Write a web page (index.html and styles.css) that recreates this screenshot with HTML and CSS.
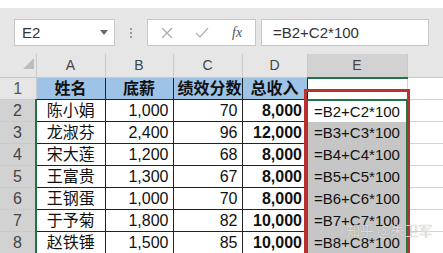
FILE: index.html
```html
<!DOCTYPE html>
<html lang="zh">
<head>
    <meta charset="UTF-8">
    <title>Excel</title>
    <link rel="stylesheet" href="styles.css">
</head>
<body>
    <div class="toolbar">
        <div class="name-box">
            <span>E2</span>
            <svg class="drop" width="8" height="5" viewBox="0 0 8 5"><path d="M0 0h8L4 5z" fill="#666"/></svg>
        </div>
        <div class="dots"><i></i><i></i><i></i></div>
        <div class="tools">
            <svg width="12" height="12" viewBox="0 0 12 12"><path d="M1 1l10 10M11 1L1 11" stroke="#aaa" stroke-width="1.3"/></svg>
            <svg width="14" height="12" viewBox="0 0 14 12"><path d="M1 6l4 4 8-9" stroke="#b5b5b5" stroke-width="1.4" fill="none"/></svg>
            <span class="fx">fx</span>
        </div>
        <div class="formula">=B2+C2*100</div>
    </div>

    <div class="sheet">
        <table class="grid">
            <colgroup>
                <col class="c-hdr"><col class="c-a"><col class="c-b"><col class="c-c"><col class="c-d"><col class="c-e"><col>
            </colgroup>
            <tr class="col-hdr">
                <th class="corner"><svg width="11" height="11" viewBox="0 0 11 11"><path d="M11 0v11H0z" fill="#bdbdbd"/></svg></th>
                <th>A</th><th>B</th><th>C</th><th>D</th><th class="sel">E</th><th class="blank"></th>
            </tr>
            <tr>
                <th class="rh">1</th>
                <td class="title">姓名</td><td class="title">底薪</td><td class="title">绩效分数</td><td class="title">总收入</td><td class="e-empty"></td><td class="out"></td>
            </tr>
            <tr>
                <th class="rh on">2</th>
                <td class="name">陈小娟</td><td class="num">1,000</td><td class="num">70</td><td class="num b">8,000</td><td class="f active">=B2+C2*100</td><td class="out"></td>
            </tr>
            <tr>
                <th class="rh on">3</th>
                <td class="name">龙淑芬</td><td class="num">2,400</td><td class="num">96</td><td class="num b">12,000</td><td class="f">=B3+C3*100</td><td class="out"></td>
            </tr>
            <tr>
                <th class="rh on">4</th>
                <td class="name">宋大莲</td><td class="num">1,200</td><td class="num">68</td><td class="num b">8,000</td><td class="f">=B4+C4*100</td><td class="out"></td>
            </tr>
            <tr>
                <th class="rh on">5</th>
                <td class="name">王富贵</td><td class="num">1,300</td><td class="num">67</td><td class="num b">8,000</td><td class="f">=B5+C5*100</td><td class="out"></td>
            </tr>
            <tr>
                <th class="rh on">6</th>
                <td class="name">王钢蛋</td><td class="num">1,000</td><td class="num">70</td><td class="num b">8,000</td><td class="f">=B6+C6*100</td><td class="out"></td>
            </tr>
            <tr>
                <th class="rh on">7</th>
                <td class="name">于予菊</td><td class="num">1,800</td><td class="num">82</td><td class="num b">10,000</td><td class="f">=B7+C7*100</td><td class="out"></td>
            </tr>
            <tr>
                <th class="rh on">8</th>
                <td class="name">赵铁锤</td><td class="num">1,500</td><td class="num">85</td><td class="num b">10,000</td><td class="f">=B8+C8*100</td><td class="out"></td>
            </tr>
            <tr>
                <th class="rh on"></th>
                <td class="name"></td><td class="num"></td><td class="num"></td><td class="num b"></td><td class="f"></td><td class="out"></td>
            </tr>
        </table>
        <div class="red-box"></div>
        <div class="mark">知乎 @朱卫军</div>
    </div>
</body>
</html>
```

FILE: styles.css
```css
body {
    margin: 0;
    width: 443px;
    height: 253px;
    overflow: hidden;
    background-color: #ffffff;
    font-family: "Liberation Sans", Arial, "Noto Sans CJK SC", sans-serif;
}
.toolbar {
    margin-top: 8px;
    height: 46px;
    background-color: #e6e6e6;
    display: flex;
    align-items: flex-start;
    padding-top: 11px;
    box-sizing: border-box;
}
.name-box {
    margin-left: 14px;
    width: 101px;
    height: 27px;
    box-sizing: border-box;
    background-color: #fff;
    border: 1px solid #c6c6c6;
    display: flex;
    align-items: center;
    justify-content: space-between;
    padding: 0 6px 0 7px;
    font-size: 15px;
    color: #333;
}
.dots {
    width: 32px;
    height: 27px;
    display: flex;
    flex-direction: column;
    align-items: center;
    justify-content: center;
    gap: 2px;
}
.dots i {
    width: 2px;
    height: 2px;
    background-color: #9a9a9a;
}
.tools {
    width: 109px;
    height: 27px;
    box-sizing: border-box;
    background-color: #fff;
    border: 1px solid #c6c6c6;
    display: flex;
    align-items: center;
    padding-left: 13px;
    gap: 22px;
}
.fx {
    font-family: "Liberation Serif", serif;
    font-style: italic;
    font-size: 14px;
    color: #555;
    margin-left: 1px;
}
.formula {
    margin-left: 5px;
    width: 168px;
    height: 27px;
    box-sizing: border-box;
    background-color: #fff;
    border: 1px solid #c6c6c6;
    font-size: 15px;
    color: #333;
    line-height: 25px;
    padding-left: 11px;
}
.sheet {
    position: relative;
}
.grid {
    border-collapse: collapse;
    table-layout: fixed;
    width: 460px;
}
.c-hdr { width: 36px; }
.c-a { width: 69px; }
.c-b { width: 68px; }
.c-c { width: 69px; }
.c-d { width: 65px; }
.c-e { width: 100px; }
.grid tr {
    height: 22px;
}
.grid th, .grid td {
    padding: 0 4px;
    white-space: nowrap;
    overflow: hidden;
    font-size: 16px;
    line-height: 21px;
}
.col-hdr th {
    background-color: #e6e6e6;
    font-weight: normal;
    font-size: 14px;
    color: #444;
    border-left: 1px solid #c9c9c9;
    border-bottom: 1px solid #c9c9c9;
}
.col-hdr .corner {
    text-align: right;
    vertical-align: bottom;
    padding: 0 2px 2px 0;
    border-left: none;
}
.col-hdr .sel {
    background-color: #d2d2d2;
    border-bottom: 2px solid #217346;
}
.col-hdr .blank {
    border-left: 1px solid #c9c9c9;
}
.rh {
    background-color: #e6e6e6;
    font-weight: normal;
    font-size: 15px;
    color: #555;
    text-align: center;
    border-bottom: 1px solid #c9c9c9;
    border-right: 1px solid #c9c9c9;
}
.rh.on {
    background-color: #d2d2d2;
    border-right: 2px solid #217346;
    color: #444;
}
.grid td {
    border: 1px solid #222;
    color: #111;
}
.title {
    background-color: #9dc3e6;
    font-weight: bold;
    text-align: center;
}
.name {
    text-align: center;
}
.num {
    text-align: right;
}
.num.b {
    font-weight: bold;
}
.grid td.f {
    background-color: #c6c6c6;
    border-left: 2px solid #217346;
    border-right: 2px solid #217346;
    border-top: none;
    border-bottom: none;
    padding-left: 6px;
    font-size: 15px;
}
.grid td.f.active {
    background-color: #fff;
    border-top: 2px solid #217346;
}
.grid td.e-empty {
    border-right: 1px solid #d4d4d4;
}
.grid td.out {
    border: 1px solid #d4d4d4;
    border-left: none;
}
.red-box {
    position: absolute;
    left: 304px;
    top: 35px;
    width: 100px;
    height: 230px;
    border: 3px solid #b8312f;
}
.mark {
    position: absolute;
    left: 346px;
    top: 166px;
    font-family: "Noto Sans CJK SC", sans-serif;
    font-size: 14px;
    color: rgba(255, 255, 255, 0.7);
    text-shadow: 0 0 1px rgba(90, 90, 90, 0.6);
}
```
